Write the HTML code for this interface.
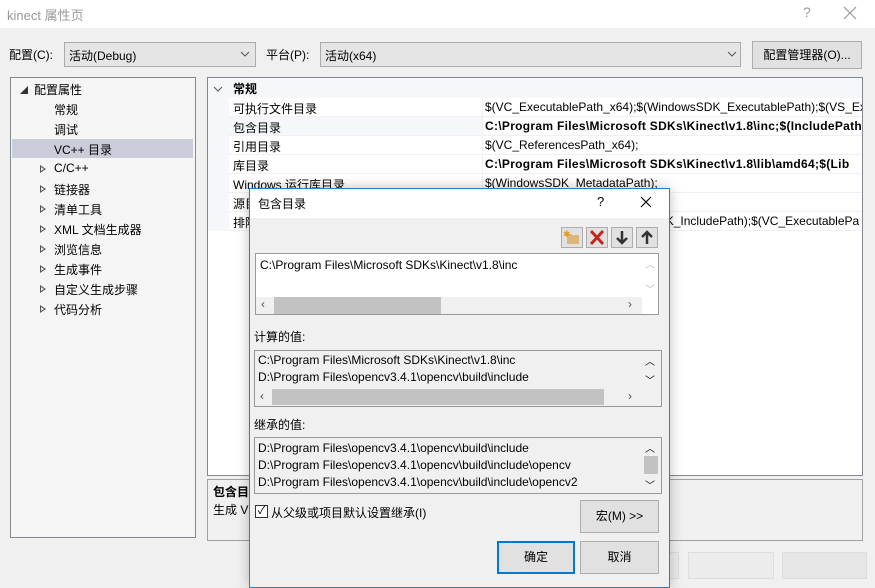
<!DOCTYPE html><html><head><meta charset="utf-8"><style>
*{box-sizing:border-box;margin:0;padding:0}
body{width:875px;height:585px;overflow:hidden;background:#f0f0f0;font-family:"Liberation Sans","Noto Sans CJK SC",sans-serif;font-size:12px;color:#000;position:relative}
.a{position:absolute;white-space:nowrap}
.box{position:absolute;border:1px solid #828790}
.btn{position:absolute;background:#e1e1e1;border:1px solid #adadad;text-align:center}
.row{position:absolute;left:229px;width:633px;height:19px;border-bottom:1px solid #eef0f4;overflow:hidden}
.row span{position:absolute;top:2px;white-space:nowrap}
.row .v{left:256px}
.b{font-weight:bold;letter-spacing:0.3px}
.t{position:absolute;left:43px;white-space:nowrap}
.tri{position:absolute;left:40px;width:0;height:0;border-left:6px solid #555;border-top:4px solid transparent;border-bottom:4px solid transparent}
.tri:after{content:"";position:absolute;left:-5px;top:-2px;border-left:3px solid #f5f5f5;border-top:2px solid transparent;border-bottom:2px solid transparent}
.sb{position:absolute;background:#c2c2c2}
</style></head><body>
<div class="a" style="left:0;top:0;width:875px;height:28px;background:#fff"></div>
<div class="a" style="left:7px;top:5px;font-size:13px;color:#999">kinect 属性页</div>
<div class="a" style="left:803px;top:4px;font-size:14px;color:#999">?</div>
<svg class="a" style="left:843px;top:6px" width="14" height="14"><path d="M1 1L13 13M13 1L1 13" stroke="#999" stroke-width="1.2"/></svg>

<div class="a" style="left:9px;top:46px">配置(C):</div>
<div class="box" style="left:64px;top:42px;width:192px;height:25px;background:#e5e5e5;border-color:#acacac"></div>
<div class="a" style="left:69px;top:47px">活动(Debug)</div>
<svg class="a" style="left:240px;top:51px" width="10" height="6"><path d="M1 1L5 5L9 1" stroke="#555" fill="none"/></svg>
<div class="a" style="left:266px;top:46px">平台(P):</div>
<div class="box" style="left:320px;top:42px;width:421px;height:25px;background:#e5e5e5;border-color:#acacac"></div>
<div class="a" style="left:325px;top:47px">活动(x64)</div>
<svg class="a" style="left:727px;top:51px" width="10" height="6"><path d="M1 1L5 5L9 1" stroke="#555" fill="none"/></svg>
<div class="btn" style="left:752px;top:41px;width:110px;height:28px;line-height:26px">配置管理器(O)...</div>

<div class="box" style="left:10px;top:77px;width:186px;height:461px;background:#f5f5f5"></div>
<div class="a" style="left:12px;top:139px;width:181px;height:19px;background:#cacdd9"></div>
<div class="a" style="left:20px;top:85px;font-size:8px;color:#333">◢</div>
<div class="t" style="left:34px;top:81px">配置属性</div>
<div class="t" style="left:54px;top:101px">常规</div>
<div class="t" style="left:54px;top:121px">调试</div>
<div class="t" style="left:54px;top:141px">VC++ 目录</div>
<div class="tri" style="top:165px"></div><div class="t" style="left:54px;top:161px">C/C++</div>
<div class="tri" style="top:185px"></div><div class="t" style="left:54px;top:181px">链接器</div>
<div class="tri" style="top:205px"></div><div class="t" style="left:54px;top:201px">清单工具</div>
<div class="tri" style="top:225px"></div><div class="t" style="left:54px;top:221px">XML 文档生成器</div>
<div class="tri" style="top:245px"></div><div class="t" style="left:54px;top:241px">浏览信息</div>
<div class="tri" style="top:265px"></div><div class="t" style="left:54px;top:261px">生成事件</div>
<div class="tri" style="top:285px"></div><div class="t" style="left:54px;top:281px">自定义生成步骤</div>
<div class="tri" style="top:305px"></div><div class="t" style="left:54px;top:301px">代码分析</div>

<div class="box" style="left:207px;top:77px;width:656px;height:399px;background:#fff"></div>
<div class="a" style="left:208px;top:78px;width:654px;height:20px;background:#f5f7fb"></div>
<div class="a" style="left:208px;top:98px;width:21px;height:133px;background:#f5f7fb"></div>
<svg class="a" style="left:213px;top:86px" width="10" height="6"><path d="M1 1L5 5L9 1" stroke="#555" fill="none"/></svg>
<div class="a" style="left:233px;top:80px;font-weight:bold">常规</div>
<div class="row" style="top:98px"><span style="left:4px">可执行文件目录</span><span class="v">$(VC_ExecutablePath_x64);$(WindowsSDK_ExecutablePath);$(VS_Ex</span></div>
<div class="row" style="top:117px;background:#f5f7fb;width:253px"></div>
<div class="row" style="top:117px;background:none"><span style="left:4px">包含目录</span><span class="v b">C:\Program Files\Microsoft SDKs\Kinect\v1.8\inc;$(IncludePath)</span></div>
<div class="row" style="top:136px"><span style="left:4px">引用目录</span><span class="v">$(VC_ReferencesPath_x64);</span></div>
<div class="row" style="top:155px"><span style="left:4px">库目录</span><span class="v b">C:\Program Files\Microsoft SDKs\Kinect\v1.8\lib\amd64;$(Lib</span></div>
<div class="row" style="top:174px"><span style="left:4px">Windows 运行库目录</span><span class="v">$(WindowsSDK_MetadataPath);</span></div>
<div class="row" style="top:193px"><span style="left:4px">源目录</span></div>
<div class="row" style="top:212px"><span style="left:4px">排除目录</span><span class="v">$(VC_IncludePath);$(WindowsSDK_IncludePath);$(VC_ExecutablePa</span></div>
<div class="a" style="left:482px;top:98px;width:1px;height:133px;background:#eef0f4"></div>

<div class="box" style="left:207px;top:479px;width:656px;height:62px;border-color:#a0a0a0"></div>
<div class="a" style="left:213px;top:483px;font-weight:bold">包含目录</div>
<div class="a" style="left:213px;top:501px">生成 VC++ 项目期间</div>

<div class="btn" style="left:660px;top:552px;width:19px;height:27px;background:#ececec;border-color:#ddd"></div>
<div class="btn" style="left:688px;top:552px;width:86px;height:27px;background:#ececec;border-color:#ddd"></div>
<div class="btn" style="left:782px;top:552px;width:85px;height:27px;background:#e6e6e6;border-color:#ddd"></div>

<div class="a" style="left:249px;top:188px;width:421px;height:400px;background:#f0f0f0;border:1px solid #1883d7;box-shadow:0 0 12px rgba(0,0,0,.25)"></div>
<div class="a" style="left:250px;top:189px;width:419px;height:29px;background:#fff"></div>
<div class="a" style="left:258px;top:195px">包含目录</div>
<div class="a" style="left:597px;top:194px;font-size:13px">?</div>
<svg class="a" style="left:640px;top:196px" width="12" height="12"><path d="M1 1L11 11M11 1L1 11" stroke="#000" stroke-width="1.2"/></svg>

<div class="btn" style="left:561px;top:227px;width:22px;height:21px"><svg width="20" height="19"><rect x="5" y="7" width="12" height="9" fill="#dcb779"/><rect x="5" y="6" width="5" height="2" fill="#dcb779"/><text x="1" y="9" font-size="9" fill="#e09a20">✱</text></svg></div>
<div class="btn" style="left:586px;top:227px;width:22px;height:21px"><svg width="20" height="19"><path d="M4 3L16 16M16 3L4 16" stroke="#c4261d" stroke-width="3"/></svg></div>
<div class="btn" style="left:611px;top:227px;width:22px;height:21px"><svg width="20" height="19"><path d="M10 3V15M5 10L10 15L15 10" stroke="#333" stroke-width="2.5" fill="none"/></svg></div>
<div class="btn" style="left:636px;top:227px;width:22px;height:21px"><svg width="20" height="19"><path d="M10 16V4M5 9L10 4L15 9" stroke="#333" stroke-width="2.5" fill="none"/></svg></div>

<div class="box" style="left:255px;top:253px;width:404px;height:62px;background:#fff;border-color:#999"></div>
<div class="a" style="left:260px;top:258px">C:\Program Files\Microsoft SDKs\Kinect\v1.8\inc</div>
<div class="a" style="left:256px;top:297px;width:386px;height:17px;background:#f0f0f0"></div>
<div class="sb" style="left:274px;top:297px;width:167px;height:17px"></div>
<div class="a" style="left:261px;top:297px;color:#555">‹</div><div class="a" style="left:628px;top:297px;color:#555">›</div>
<div class="a" style="left:645px;top:256px;color:#bbb;font-size:10px">︿</div><div class="a" style="left:645px;top:281px;color:#bbb;font-size:10px">﹀</div>

<div class="a" style="left:254px;top:328px">计算的值:</div>
<div class="box" style="left:254px;top:350px;width:408px;height:57px;background:#f0f0f0;border-color:#999"></div>
<div class="a" style="left:258px;top:353px">C:\Program Files\Microsoft SDKs\Kinect\v1.8\inc</div>
<div class="a" style="left:258px;top:370px">D:\Program Files\opencv3.4.1\opencv\build\include</div>
<div class="sb" style="left:272px;top:389px;width:332px;height:16px"></div>
<div class="a" style="left:260px;top:389px;color:#555">‹</div><div class="a" style="left:628px;top:389px;color:#555">›</div>
<div class="a" style="left:645px;top:353px;font-size:10px">︿</div><div class="a" style="left:645px;top:372px;font-size:10px">﹀</div>

<div class="a" style="left:254px;top:416px">继承的值:</div>
<div class="box" style="left:254px;top:437px;width:408px;height:57px;background:#f0f0f0;border-color:#999"></div>
<div class="a" style="left:258px;top:441px">D:\Program Files\opencv3.4.1\opencv\build\include</div>
<div class="a" style="left:258px;top:458px">D:\Program Files\opencv3.4.1\opencv\build\include\opencv</div>
<div class="a" style="left:258px;top:475px">D:\Program Files\opencv3.4.1\opencv\build\include\opencv2</div>
<div class="sb" style="left:644px;top:456px;width:14px;height:18px"></div>
<div class="a" style="left:645px;top:440px;font-size:10px">︿</div><div class="a" style="left:645px;top:477px;font-size:10px">﹀</div>

<div class="a" style="left:255px;top:505px;width:13px;height:13px;background:#fff;border:1px solid #333;font-size:11px;line-height:11px;text-align:center">✓</div>
<div class="a" style="left:271px;top:504px">从父级或项目默认设置继承(I)</div>
<div class="btn" style="left:580px;top:500px;width:79px;height:33px;line-height:31px">宏(M) &gt;&gt;</div>
<div class="btn" style="left:497px;top:541px;width:78px;height:33px;line-height:29px;border:2px solid #0078d7">确定</div>
<div class="btn" style="left:580px;top:541px;width:79px;height:33px;line-height:31px">取消</div>
</body></html>
